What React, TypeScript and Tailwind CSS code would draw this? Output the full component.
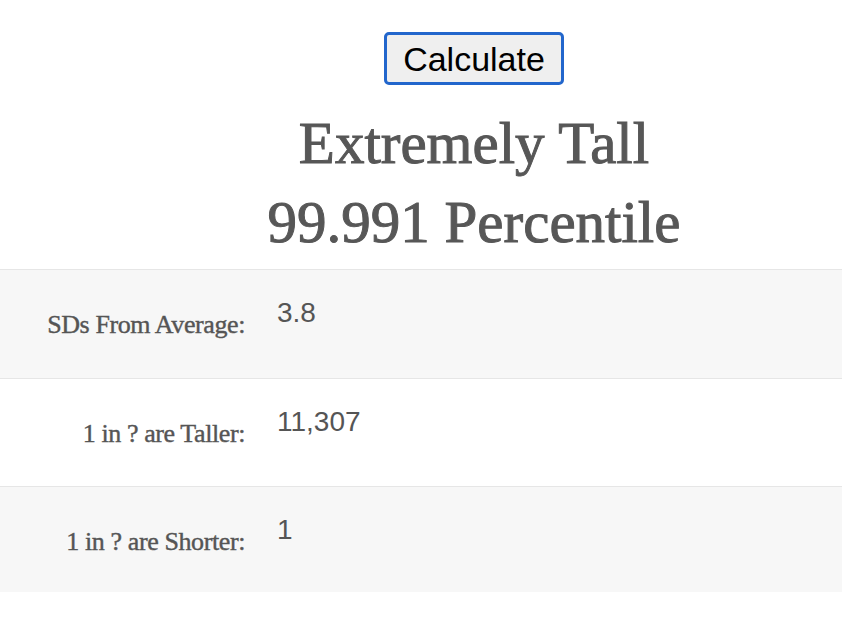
import React from 'react';

const rows = [
  { label: 'SDs From Average:', value: '3.8', shaded: true, height: 'h-[109px]' },
  { label: '1 in ? are Taller:', value: '11,307', shaded: false, height: 'h-[108px]' },
  { label: '1 in ? are Shorter:', value: '1', shaded: true, height: 'h-[106px]' },
];

export default function App() {
  return (
    <div className="min-h-[630px] bg-white">
      {/* Calculate + result */}
      <div className="pl-[106px] pt-[32px] text-center">
        <button
          type="button"
          className="h-[53px] w-[180px] rounded-[5px] border-[3px] border-[#2266cc] bg-[#efefef] text-[34px] leading-none text-black"
          style={{ fontFamily: '"Liberation Sans", Arial, sans-serif' }}
        >
          Calculate
        </button>
        <h2
          className="mt-[19px] text-[59px] leading-[79px] text-[#575757] [-webkit-text-stroke:1px_#575757]"
          style={{ fontFamily: '"Liberation Serif", "Times New Roman", serif' }}
        >
          Extremely Tall
          <br />
          99.991 Percentile
        </h2>
      </div>

      {/* Stats table */}
      <div className="mt-[7px]">
        {rows.map((row) => (
          <div
            key={row.label}
            className={`flex border-t border-[#e6e6e6] ${row.shaded ? 'bg-[#f7f7f7]' : 'bg-white'} ${row.height}`}
          >
            <div
              className="w-[245px] pt-[35px] text-right text-[26px] tracking-[-0.4px] text-[#555] [-webkit-text-stroke:0.4px_#555]"
              style={{ fontFamily: '"Liberation Serif", "Times New Roman", serif' }}
            >
              {row.label}
            </div>
            <div
              className="pl-[32px] pt-[22px] text-[28px] text-[#555]"
              style={{ fontFamily: '"Liberation Sans", Arial, sans-serif' }}
            >
              {row.value}
            </div>
          </div>
        ))}
      </div>
    </div>
  );
}
